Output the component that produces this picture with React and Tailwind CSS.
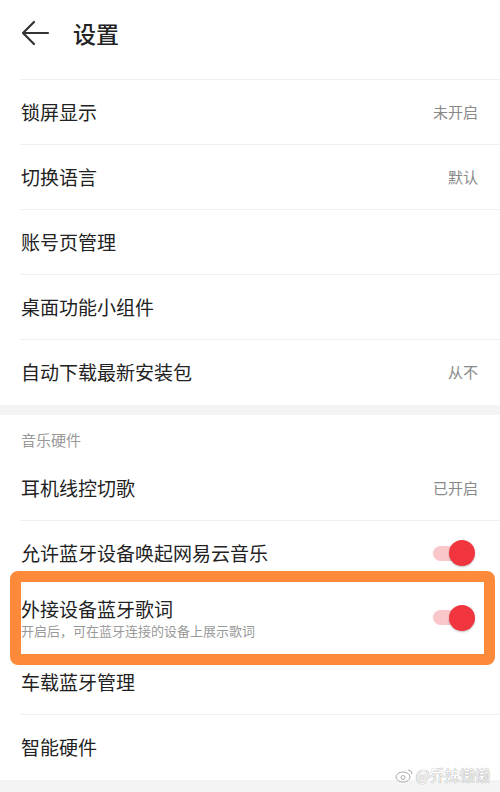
import React from 'react';

const font = { fontFamily: '"Noto Sans CJK SC", "Noto Sans", sans-serif' };

const Toggle = () => (
  <div className="relative w-[42px] h-[26px] flex items-center">
    <div className="w-[38px] h-[15px] rounded-full bg-[#f9c6c9]" />
    <div className="absolute right-0 top-0 w-[26px] h-[26px] rounded-full bg-[#f0353e] shadow-[0_1px_2px_rgba(0,0,0,0.25)]" />
  </div>
);

const Row = ({ title, value, last }) => (
  <div className={`h-[65px] ml-[20px] pl-[1px] pr-[22px] flex items-center justify-between ${last ? '' : 'border-b border-[#efefef]'}`}>
    <span className="text-[19px] text-[#222]">{title}</span>
    {value && <span className="text-[15px] text-[#888]">{value}</span>}
  </div>
);

const App = () => {
  return (
    <div className="w-[500px] h-[792px] bg-white overflow-hidden relative" style={font}>
      {/* header */}
      <div className="h-[80px] ml-[20px] border-b border-[#efefef] pt-[18px]">
        <div className="h-[30px] flex items-center">
          <svg width="30" height="26" viewBox="0 0 30 26" className="ml-[1px]" fill="none" stroke="#333" strokeWidth="2.2" strokeLinecap="round" strokeLinejoin="round">
            <path d="M27 13H3" />
            <path d="M13 2L2 13l11 11" />
          </svg>
          <span className="ml-[22px] text-[23px] leading-[30px] text-[#222] font-medium">设置</span>
        </div>
      </div>

      <Row title="锁屏显示" value="未开启" />
      <Row title="切换语言" value="默认" />
      <Row title="账号页管理" />
      <Row title="桌面功能小组件" />
      <Row title="自动下载最新安装包" value="从不" last />

      <div className="h-[10px] bg-[#f4f4f4]" />

      <div className="h-[41px] pl-[21px] pt-[16px]">
        <div className="text-[15px] leading-[18px] text-[#999]">音乐硬件</div>
      </div>

      <Row title="耳机线控切歌" value="已开启" />

      <div className="h-[64px] ml-[20px] pl-[1px] pr-[25px] flex items-center justify-between">
        <span className="text-[19px] text-[#222]">允许蓝牙设备唤起网易云音乐</span>
        <Toggle />
      </div>

      <div className="relative h-[65px] pl-[21px] pr-[25px] flex items-center justify-between">
        <div className="flex flex-col">
          <span className="text-[19px] leading-[26px] text-[#222]">外接设备蓝牙歌词</span>
          <span className="text-[13px] leading-[18px] text-[#999]">开启后，可在蓝牙连接的设备上展示歌词</span>
        </div>
        <Toggle />
        <div className="absolute left-[10px] right-[5px] top-[-14px] bottom-[-15px] border-[11px] border-[#fd8a3b] rounded-[8px] pointer-events-none" />
      </div>

      <Row title="车载蓝牙管理" />
      <Row title="智能硬件" last />

      <div className="h-[14px] bg-[#f4f4f4]" />

      {/* watermark */}
      <div className="absolute right-[10px] bottom-[6px] flex items-center gap-[3px] text-[15px] text-white [text-shadow:0_0_1px_#999,0_0_1px_#999]">
        <svg width="18" height="16" viewBox="0 0 18 16" fill="white" stroke="#aaa" strokeWidth="1">
          <ellipse cx="8" cy="10" rx="7" ry="5" />
          <circle cx="8" cy="10.5" r="2" />
          <path d="M13 3a4 4 0 0 1 4 4" fill="none" />
        </svg>
        <span>@乔妹懒懒</span>
      </div>
    </div>
  );
};

export default App;
